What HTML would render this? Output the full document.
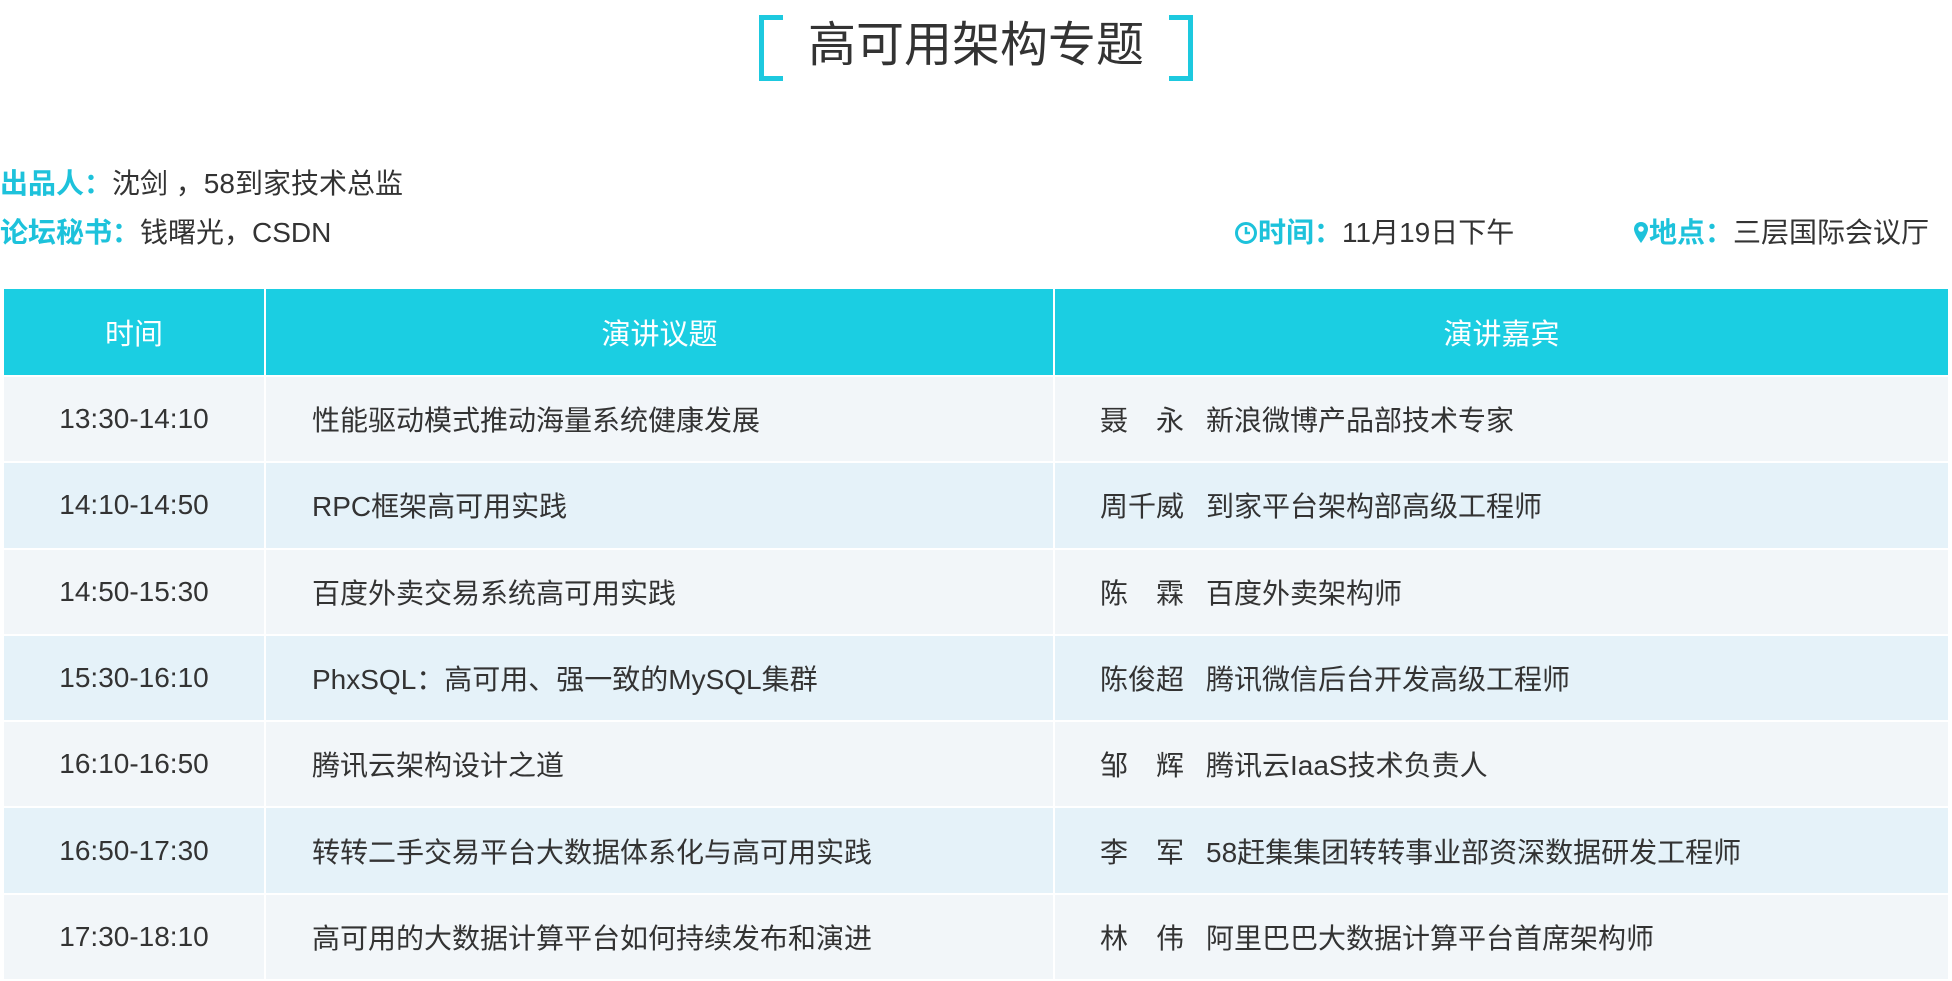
<!DOCTYPE html>
<html><head><meta charset="utf-8"><style>
*{margin:0;padding:0;box-sizing:border-box}
body{width:1952px;height:973px;overflow:hidden;background:#fff;font-family:"Liberation Sans","Noto Sans CJK SC",sans-serif;color:#333;position:relative}
.br{position:absolute;top:15px;width:24px;height:66px;border:5px solid #1dc9df}
.bl{left:759px;border-right:none}
.brr{left:1169px;border-left:none}
.title{position:absolute;left:0;width:1952px;top:15px;text-align:center;font-size:48px;line-height:62px;color:#333}
.l{position:absolute;font-size:28px;line-height:36px;white-space:nowrap}
.b{color:#1dc2db;font-weight:bold}
table{position:absolute;left:2px;top:289px;width:1948px;border-collapse:collapse;table-layout:fixed}
th{background:#1bcee2;color:#fff;font-weight:normal;font-size:29px;height:87px;border:2px solid #fff;border-top:none}
td{height:86.3px;font-size:28px;border:2px solid #fff;white-space:nowrap}
tr:nth-child(even) td{background:#f2f6f9}
tr:nth-child(odd) td{background:#e5f2f9}
td.t{text-align:center}
td.p{padding-left:46px}
td.s{padding-left:45px}
.n{display:inline-block;width:106px}
</style></head><body>
<div class="br bl"></div><div class="br brr"></div>
<div class="title">高可用架构专题</div>
<div class="l" style="left:0;top:166px"><span class="b">出品人：</span>沈剑 ，58到家技术总监</div>
<div class="l" style="left:0;top:215px"><span class="b">论坛秘书：</span>钱曙光，CSDN</div>
<div class="l" style="left:1234px;top:215px"><svg width="24" height="24" viewBox="0 0 24 24" style="vertical-align:-3px"><circle cx="12" cy="12" r="9.5" fill="none" stroke="#1dc2db" stroke-width="3"/><path d="M12 6v6h4" fill="none" stroke="#1dc2db" stroke-width="2.5"/></svg><span class="b">时间：</span>11月19日下午</div>
<div class="l" style="left:1633px;top:215px"><svg width="16" height="24" viewBox="0 0 16 24" style="vertical-align:-3px"><path d="M8 1C3.5 1 1 4.5 1 8c0 5 7 14 7 14s7-9 7-14c0-3.5-2.5-7-7-7z" fill="#1dc2db"/><circle cx="8" cy="8" r="2.8" fill="#fff"/></svg><span class="b">地点：</span>三层国际会议厅</div>
<table>
<colgroup><col style="width:262px"><col style="width:789px"><col></colgroup>
<tr><th>时间</th><th>演讲议题</th><th>演讲嘉宾</th></tr>
<tr><td class="t">13:30-14:10</td><td class="p">性能驱动模式推动海量系统健康发展</td><td class="s"><span class="n">聂　永</span>新浪微博产品部技术专家</td></tr>
<tr><td class="t">14:10-14:50</td><td class="p">RPC框架高可用实践</td><td class="s"><span class="n">周千威</span>到家平台架构部高级工程师</td></tr>
<tr><td class="t">14:50-15:30</td><td class="p">百度外卖交易系统高可用实践</td><td class="s"><span class="n">陈　霖</span>百度外卖架构师</td></tr>
<tr><td class="t">15:30-16:10</td><td class="p">PhxSQL：高可用、强一致的MySQL集群</td><td class="s"><span class="n">陈俊超</span>腾讯微信后台开发高级工程师</td></tr>
<tr><td class="t">16:10-16:50</td><td class="p">腾讯云架构设计之道</td><td class="s"><span class="n">邹　辉</span>腾讯云IaaS技术负责人</td></tr>
<tr><td class="t">16:50-17:30</td><td class="p">转转二手交易平台大数据体系化与高可用实践</td><td class="s"><span class="n">李　军</span>58赶集集团转转事业部资深数据研发工程师</td></tr>
<tr><td class="t">17:30-18:10</td><td class="p">高可用的大数据计算平台如何持续发布和演进</td><td class="s"><span class="n">林　伟</span>阿里巴巴大数据计算平台首席架构师</td></tr>
</table>
</body></html>
